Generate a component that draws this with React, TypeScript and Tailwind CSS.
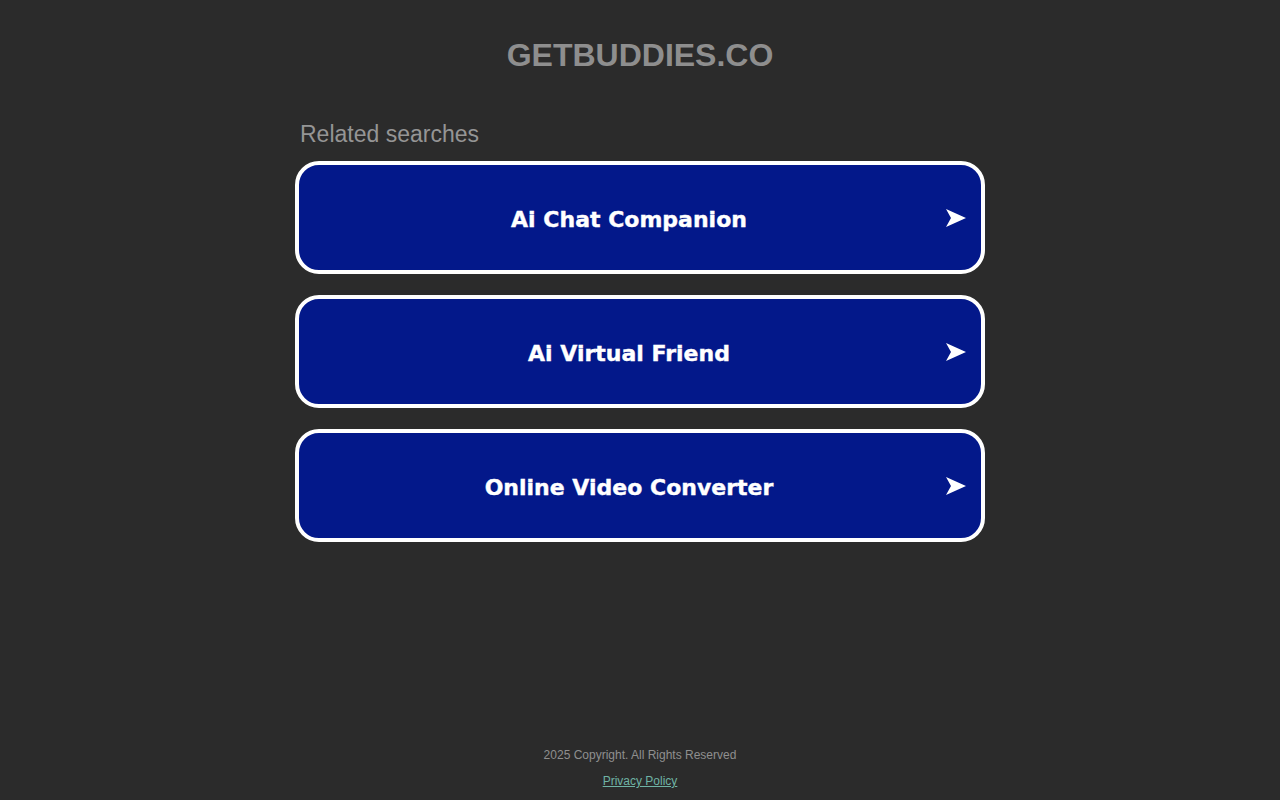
const searches = ["Ai Chat Companion", "Ai Virtual Friend", "Online Video Converter"];

function Arrow() {
  return (
    <svg width="22" height="20" viewBox="0 0 22 20" className="shrink-0">
      <path d="M1 1 L21 10 L1 19 L6 10 Z" fill="white" />
    </svg>
  );
}

export default function App() {
  return (
    <div className="min-h-screen bg-[#2b2b2b] flex flex-col items-center font-['Liberation_Sans',Arial,sans-serif]">
      <h1 className="mt-[35px] text-[32px] leading-[40px] font-bold text-[#8e8e8e]">GETBUDDIES.CO</h1>

      <div className="mt-[43px] w-[690px]">
        <div className="pl-[5px] text-[23px] leading-[32px] text-[#959595]">Related searches</div>
        <div className="mt-[11px] flex flex-col gap-[21px]">
          {searches.map(s => (
            <a
              key={s}
              href="#"
              className="h-[113px] rounded-[24px] border-4 border-white bg-[#03188a] flex items-center pl-[14px] pr-[14px]"
            >
              <span className="flex-1 pt-[3px] text-center text-white text-[22px] font-bold font-['DejaVu_Sans',sans-serif] [-webkit-text-stroke:0.4px_white]">
                {s}
              </span>
              <Arrow />
            </a>
          ))}
        </div>
      </div>

      <div className="mt-auto pb-[12px] flex flex-col items-center text-[12px] leading-[14px]">
        <div className="text-[#8f8f8f]">2025 Copyright. All Rights Reserved</div>
        <a href="#" className="mt-[12px] text-[#6fb3a5] underline">Privacy Policy</a>
      </div>
    </div>
  );
}
